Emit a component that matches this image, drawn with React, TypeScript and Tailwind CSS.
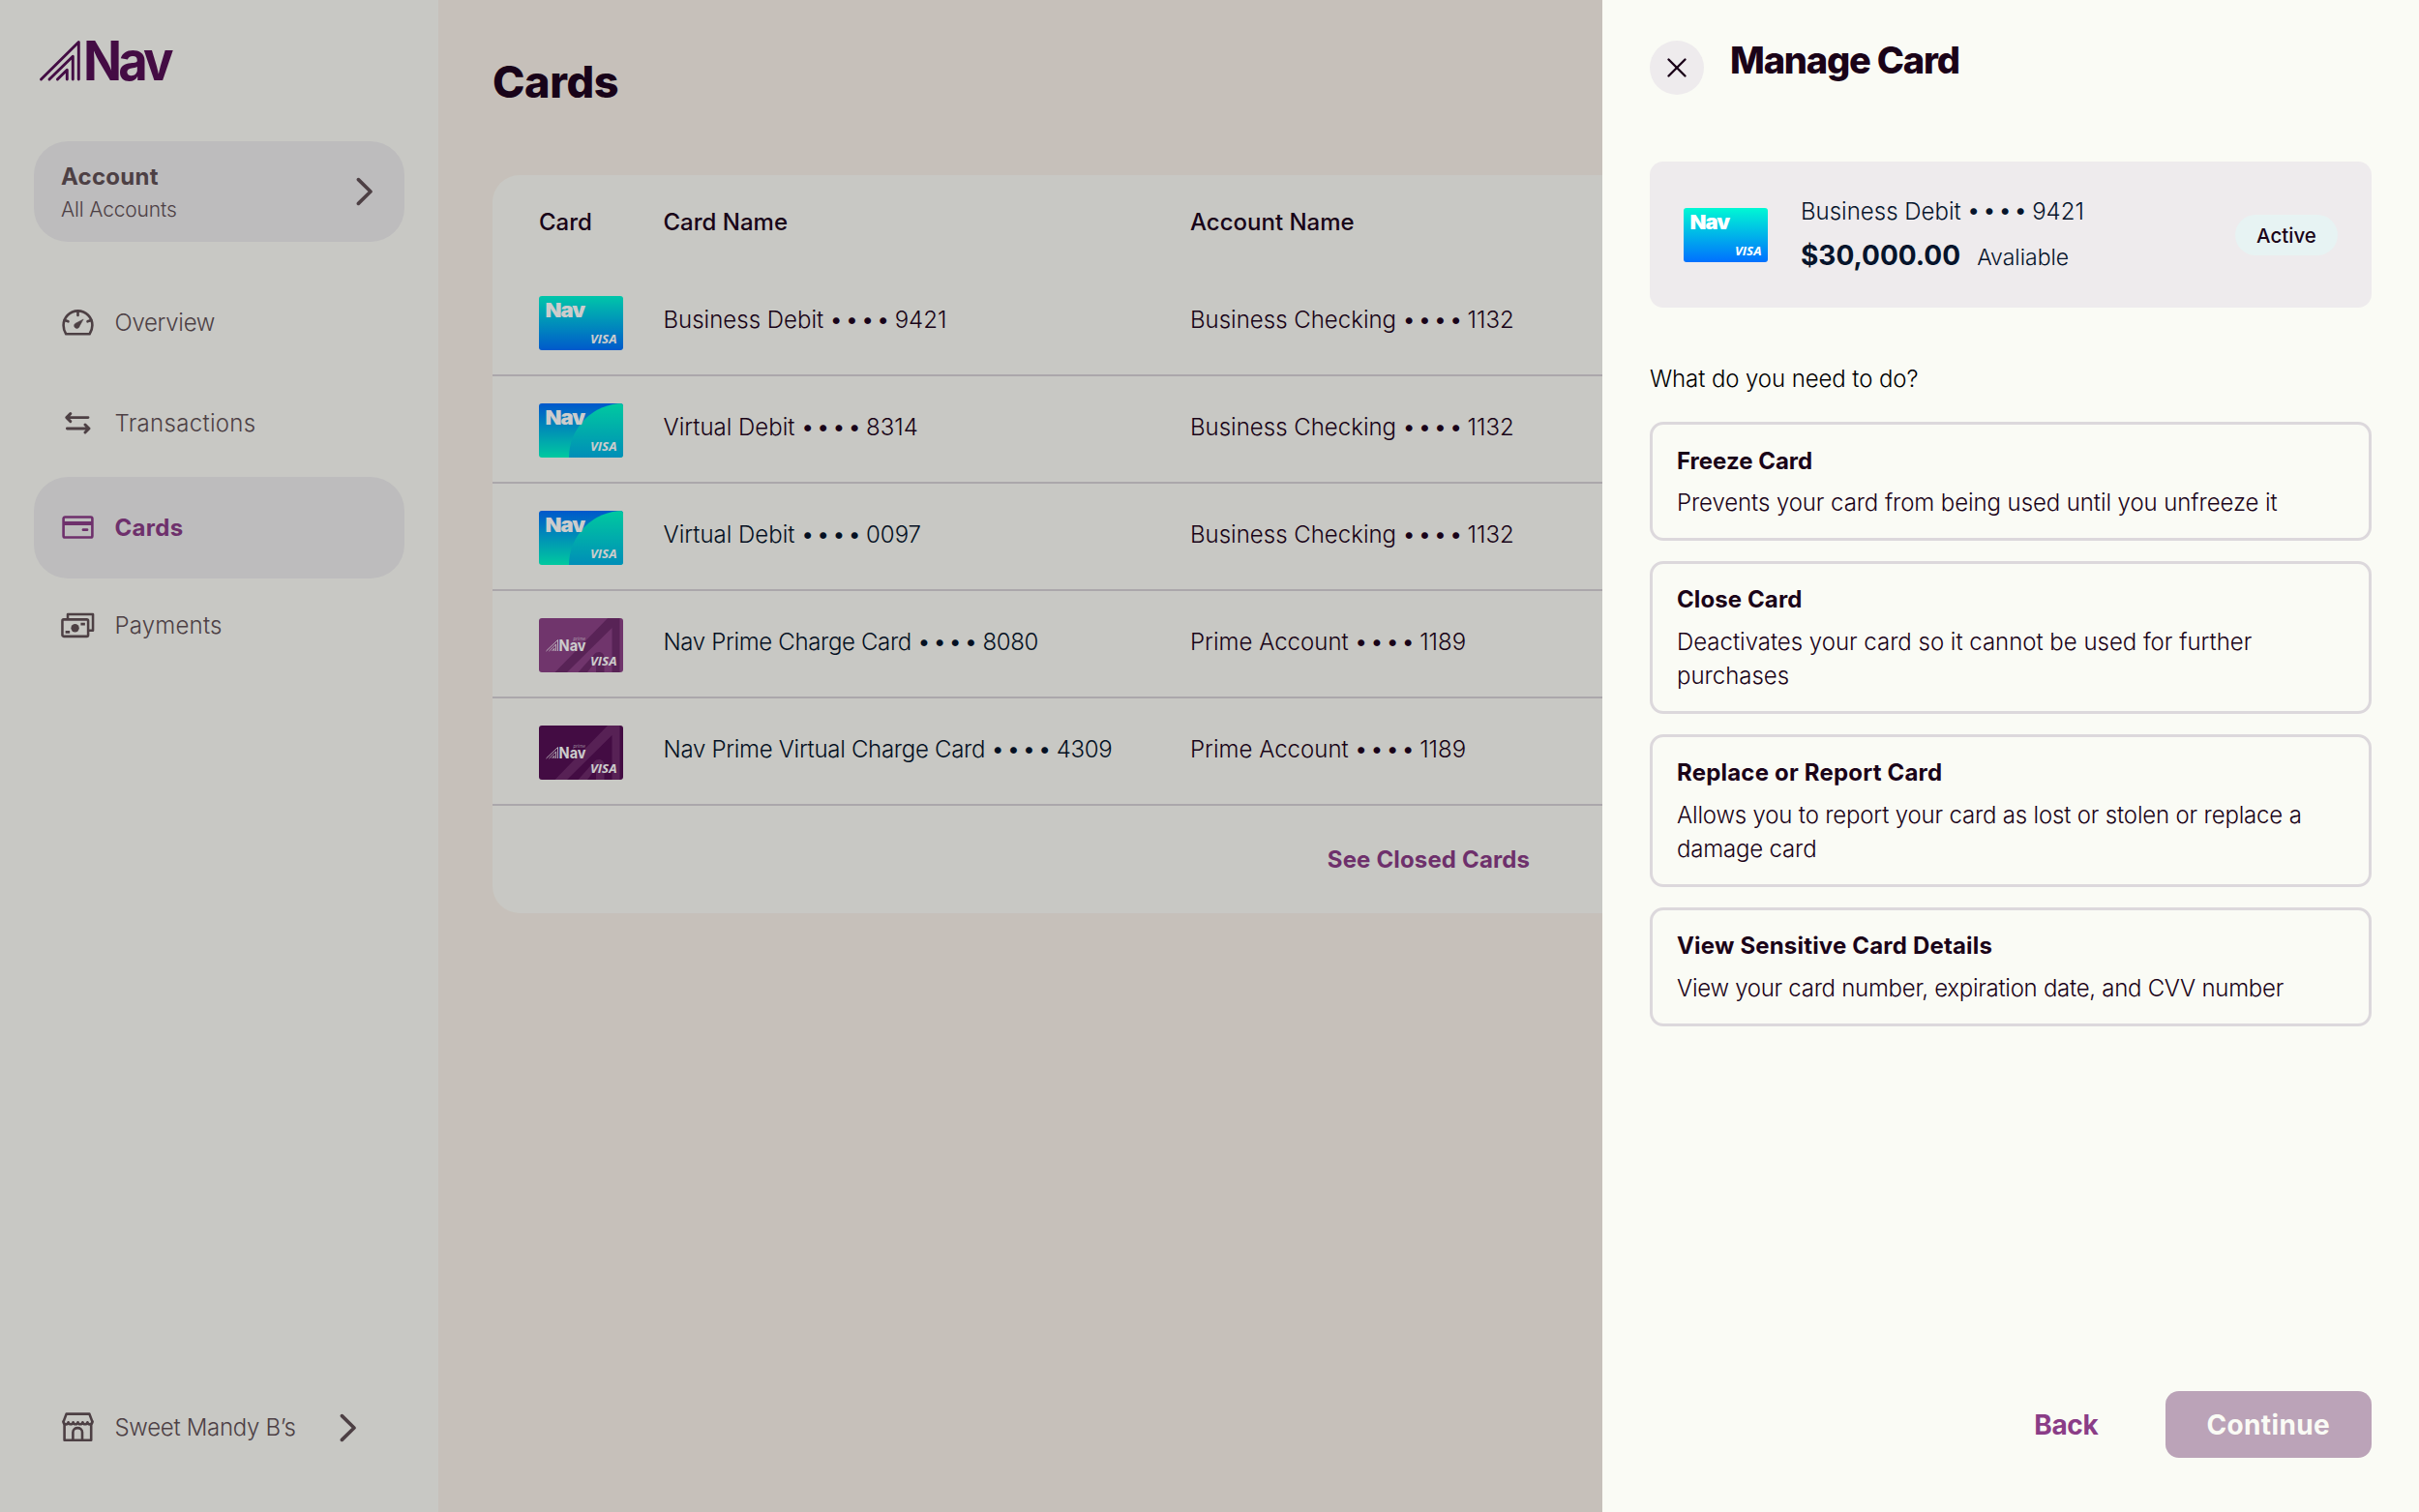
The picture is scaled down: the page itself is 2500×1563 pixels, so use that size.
import React from 'react';
import { X } from 'lucide-react';

type CardArtVariant = 'debit' | 'virtual' | 'prime' | 'primeVirtual';

interface CardRow {
  art: CardArtVariant;
  name: string;
  last4: string;
  account: string;
  accountLast4: string;
  nameClass: string;
}

const rows: CardRow[] = [
  { art: 'debit', name: 'Business Debit', last4: '9421', account: 'Business Checking', accountLast4: '1132', nameClass: 'text-[#1f0420]' },
  { art: 'virtual', name: 'Virtual Debit', last4: '8314', account: 'Business Checking', accountLast4: '1132', nameClass: 'text-[#1f0420]' },
  { art: 'virtual', name: 'Virtual Debit', last4: '0097', account: 'Business Checking', accountLast4: '1132', nameClass: 'text-[#06142b]' },
  { art: 'prime', name: 'Nav Prime Charge Card', last4: '8080', account: 'Prime Account', accountLast4: '1189', nameClass: 'text-[#06142b] tracking-[-0.35px]' },
  { art: 'primeVirtual', name: 'Nav Prime Virtual Charge Card', last4: '4309', account: 'Prime Account', accountLast4: '1189', nameClass: 'text-[#06142b] tracking-[-0.3px]' },
];

const options = [
  {
    title: 'Freeze Card',
    titleClass: 'tracking-normal',
    description: 'Prevents your card from being used until you unfreeze it',
    descriptionClass: 'tracking-[-0.09px]',
  },
  {
    title: 'Close Card',
    titleClass: 'tracking-[0.1px]',
    description: 'Deactivates your card so it cannot be used for further purchases',
    descriptionClass: 'tracking-[-0.02px]',
  },
  {
    title: 'Replace or Report Card',
    titleClass: 'tracking-[0.2px]',
    description: 'Allows you to report your card as lost or stolen or replace a damage card',
    descriptionClass: 'tracking-[-0.18px]',
  },
  {
    title: 'View Sensitive Card Details',
    titleClass: 'tracking-[0.18px]',
    description: 'View your card number, expiration date, and CVV number',
    descriptionClass: 'tracking-[-0.28px]',
  },
];

function Logo() {
  return (
    <svg width="144" height="44" viewBox="0 0 144 44" className="overflow-visible text-[#551055]">
      <g fill="none" stroke="currentColor" strokeWidth="2.9" strokeLinecap="round" strokeLinejoin="round">
        <path d="M2.5 41 L41.3 2.5 V41" />
        <path d="M11 41 L35.3 17.2 V41" />
        <path d="M19.4 41 L29.3 31.2 V41" />
      </g>
      <text
        x="46"
        y="41.5"
        fill="currentColor"
        fontFamily="Inter, sans-serif"
        fontWeight="700"
        fontSize="56"
        letterSpacing="-4.2"
        textLength="89.5"
        lengthAdjust="spacingAndGlyphs"
      >
        Nav
      </text>
    </svg>
  );
}

function GaugeIcon() {
  return (
    <svg width="33" height="27" viewBox="0 0 33 27" fill="none" stroke="currentColor" strokeWidth="2.6" strokeLinejoin="round" strokeLinecap="round">
      <path d="M4.2 25.3 C2.3 22.5 1.6 19.4 1.6 16.3 A14.9 14.9 0 0 1 31.4 16.3 C31.4 19.4 30.4 22.5 28.6 25.3 Z" />
      <path d="M16.5 1.8 V6 M2.8 11 L6.5 12.3 M30.2 11 L26.5 12.3" />
      <path d="M21.8 10.2 L13.8 14.4 A2.8 2.8 0 1 0 18.2 17.2 Z" fill="currentColor" stroke="currentColor" strokeWidth="0.6" />
    </svg>
  );
}

function TransferIcon() {
  return (
    <svg width="27" height="23" viewBox="0 0 27 23" fill="none" stroke="currentColor" strokeWidth="2.9" strokeLinejoin="round" strokeLinecap="round">
      <path d="M24 5.6 H1.8 M5.8 1.6 L1.8 5.6 L5.8 9.6" />
      <path d="M2.4 17 H25 M21 13 L25 17 L21 21" />
    </svg>
  );
}

function CardIcon() {
  return (
    <svg width="33" height="24" viewBox="0 0 33 24" fill="none" stroke="currentColor" strokeWidth="2.6">
      <rect x="1.6" y="1.5" width="29.8" height="21" rx="1.6" />
      <path d="M2 8 H31" strokeWidth="4" />
      <path d="M22 14.7 H26" strokeLinecap="round" strokeWidth="2.8" />
    </svg>
  );
}

function CashIcon() {
  return (
    <svg width="36" height="27" viewBox="0 0 36 27" fill="none" stroke="currentColor" strokeWidth="2.6" strokeLinejoin="round">
      <rect x="1.5" y="7.2" width="27.4" height="18" rx="1.4" />
      <path d="M7.2 7 V1.6 H34 V19 H29" />
      <circle cx="15" cy="16.3" r="4.3" fill="currentColor" stroke="none" />
      <path d="M21 12 H25.6 M4.8 20.6 H9.4" strokeWidth="2.8" />
    </svg>
  );
}

function StoreIcon() {
  return (
    <svg width="33" height="31" viewBox="0 0 33 31" fill="none" stroke="currentColor" strokeWidth="2.6" strokeLinejoin="round" strokeLinecap="round">
      <path d="M1.6 9.6 L4.6 1.6 H28.4 L31.4 9.6" />
      <path d="M1.6 9.6 C1.6 13.2 6 13.2 6.6 10.2 C7.2 13 11 13 11.6 10.2 C12.2 13 15.9 13 16.5 10.2 C17.1 13 20.8 13 21.4 10.2 C22 13 25.8 13 26.4 10.2 C27 13.2 31.4 13.2 31.4 9.6" />
      <path d="M2.6 12 V28.8 H30.2 V12" />
      <path d="M11.4 28.8 V20.6 C11.4 14.6 21 14.6 21 20.6 V28.8" />
    </svg>
  );
}

function Chevron() {
  return (
    <svg width="18" height="30" viewBox="0 0 18 30" fill="none" stroke="currentColor" strokeWidth="3.6" strokeLinecap="round" strokeLinejoin="round">
      <path d="M2.4 2.6 L15 15 L2.4 27.4" />
    </svg>
  );
}

function CardArt({ variant, id }: { variant: CardArtVariant; id: string }) {
  const isPrime = variant === 'prime' || variant === 'primeVirtual';
  const base = variant === 'prime' ? '#8c4387' : '#540f54';
  const pattern = variant === 'prime' ? '#6f2c6c' : '#6d2a6b';

  return (
    <svg width="87" height="56" viewBox="0 0 87 56" className="shrink-0 rounded-[3px]">
      <defs>
        <linearGradient id={`${id}-bg`} x1="0" y1="0" x2="0" y2="1">
          <stop offset="0" stopColor={variant === 'debit' ? '#00f8d4' : '#006eff'} />
          <stop offset="1" stopColor={variant === 'debit' ? '#0070ff' : '#00fcc8'} />
        </linearGradient>
        <linearGradient id={`${id}-arc`} x1="0" y1="0" x2="0" y2="1">
          <stop offset="0" stopColor="#00fcc8" />
          <stop offset="1" stopColor="#00b2e6" />
        </linearGradient>
      </defs>
      <rect width="87" height="56" fill={isPrime ? base : `url(#${id}-bg)`} />
      {variant === 'virtual' && <path d="M31 56 A56 56 0 0 1 87 0 V56 Z" fill={`url(#${id}-arc)`} />}
      {isPrime && (
        <g fill={pattern}>
          <path d="M16.5 56 L71 0 H83.5 V56 H75.5 V10 L29 56 Z" />
          <path d="M40.5 56 L57 37.5 C61 33 67.5 35 67.5 41 V56 H59 V44 L50 56 Z" />
        </g>
      )}
      {isPrime ? (
        <>
          <g fill="none" stroke="#fff" strokeWidth="0.8" strokeLinejoin="round">
            <path d="M7.5 34 L19.5 22.5 V34 M10.5 34 L17.6 27 V34 M13.4 34 L15.8 31.4 V34" />
          </g>
          <text x="20.6" y="34.2" fill="#fff" fontFamily="Inter, sans-serif" fontWeight="700" fontSize="16.5" textLength="28" lengthAdjust="spacingAndGlyphs">
            Nav
          </text>
          <text x="35.5" y="23.2" fill="#fff" opacity="0.75" fontFamily="Inter, sans-serif" fontStyle="italic" fontSize="4.8" textLength="12.5" lengthAdjust="spacingAndGlyphs">
            prime
          </text>
        </>
      ) : (
        <text x="6.4" y="22" fill="#fff" fontFamily="Inter, sans-serif" fontWeight="900" fontSize="20.5" letterSpacing="-0.8" textLength="41" lengthAdjust="spacingAndGlyphs">
          Nav
        </text>
      )}
      <text x="53" y="48.5" fill="#fff" fontFamily="'Open Sans', sans-serif" fontStyle="italic" fontWeight="700" fontSize="12.5" textLength="27.5" lengthAdjust="spacingAndGlyphs">
        VISA
      </text>
    </svg>
  );
}

function MaskedNumber({ label, last4 }: { label: string; last4: string }) {
  return (
    <span className="flex items-center whitespace-nowrap">
      <span>{label}</span>
      <span className="w-[73.5px] pb-[2px] text-center text-[22px] font-normal tracking-[-1.2px]">• • • •</span>
      <span>{last4}</span>
    </span>
  );
}

function NavItem({ icon, label, active, className }: { icon: React.ReactNode; label: string; active?: boolean; className: string }) {
  return (
    <a
      className={`flex items-center rounded-[35px] pl-[28px] ${
        active ? 'bg-[#edebed] font-bold text-[#8a3d87]' : 'font-light text-[#615056]'
      } ${className}`}
    >
      <span className="flex w-[35px] justify-center">{icon}</span>
      <span className="ml-[20.5px] pt-[1px]">{label}</span>
    </a>
  );
}

function Sidebar() {
  return (
    <aside className="flex h-full w-[453px] shrink-0 flex-col bg-[#fafbf5] pr-[35px] pb-[39px] pl-[35px] text-[#615056]">
      <div className="mt-[41px] ml-[5px] h-[44px]">
        <Logo />
      </div>
      <div className="mt-[61px] flex h-[104px] items-center justify-between rounded-[35px] bg-[#edebed] pr-[32px] pl-[28px]">
        <div className="pt-[2.5px]">
          <div className="text-[24px] leading-[35px] font-bold tracking-[0.25px]">Account</div>
          <div className="text-[21px] leading-[33px] font-light tracking-[-0.15px]">All Accounts</div>
        </div>
        <Chevron />
      </div>
      <nav className="mt-[31px] flex flex-col">
        <NavItem icon={<GaugeIcon />} label="Overview" className="h-[104px] tracking-[-0.3px]" />
        <NavItem icon={<TransferIcon />} label="Transactions" className="h-[108px] pb-[3px] tracking-[0.3px]" />
        <NavItem icon={<CardIcon />} label="Cards" active className="h-[104.5px] tracking-[0.3px]" />
        <NavItem icon={<CashIcon />} label="Payments" className="h-[97px] tracking-[0.2px]" />
      </nav>
      <div className="mt-auto flex items-center justify-between pr-[49px] text-[#615056]">
        <NavItem icon={<StoreIcon />} label="Sweet Mandy B’s" className="h-[97px] tracking-[-0.3px]" />
        <Chevron />
      </div>
    </aside>
  );
}

function CardsTable() {
  return (
    <section className="mt-[77px] overflow-hidden rounded-[28px] bg-[#fafbf5] text-[#1f0420]">
      <div className="flex h-[97px] items-center pl-[48px] font-medium">
        <div className="w-[128.5px]">Card</div>
        <div className="w-[544.5px]">Card Name</div>
        <div>Account Name</div>
      </div>
      {rows.map((row) => (
        <div key={row.last4} className="flex h-[111.1px] items-center border-b-2 border-[#d6d1d6] pt-[2px] pl-[48px] font-light">
          <div className="w-[128.5px]">
            <CardArt variant={row.art} id={`row-${row.last4}`} />
          </div>
          <div className={`w-[544.5px] pb-[6px] ${row.nameClass}`}>
            <MaskedNumber label={row.name} last4={row.last4} />
          </div>
          <div className="pb-[6px]">
            <MaskedNumber label={row.account} last4={row.accountLast4} />
          </div>
        </div>
      ))}
      <div className="flex h-[110.6px] items-center justify-center pt-[1px] font-bold tracking-[0.15px] text-[#8a3d87]">See Closed Cards</div>
    </section>
  );
}

function ManageCardDrawer() {
  return (
    <aside className="flex h-full w-[844px] flex-col bg-[#fafbf5] px-[49px] pt-[42px] pb-[56px] text-[#1a0318]">
      <div className="flex items-start">
        <button className="flex size-[55.5px] items-center justify-center rounded-full bg-[#eeebed]">
          <X className="size-[34px]" strokeWidth={1.7} />
        </button>
        <h2 className="ml-[27.5px] pt-[1px] text-[38px] leading-[38px] font-extrabold tracking-[-1.2px]">Manage Card</h2>
      </div>

      <div className="mt-[69.5px] flex h-[151px] items-center rounded-[14px] bg-[#eeebed] pr-[35px] pl-[35px]">
        <CardArt variant="debit" id="summary" />
        <div className="ml-[34px] pb-[1px] text-[#06142b]">
          <div className="leading-[43.5px] font-light">
            <MaskedNumber label="Business Debit" last4="9421" />
          </div>
          <div className="flex items-baseline leading-[44.5px]">
            <span className="text-[28px] font-bold">$30,000.00</span>
            <span className="ml-[17px] text-[23px] font-light">Avaliable</span>
          </div>
        </div>
        <div className="ml-auto flex h-[42px] w-[106px] items-center justify-center rounded-full bg-[#e7f3f3] pt-[2px] text-[20.5px] font-medium">
          Active
        </div>
      </div>

      <p className="mt-[55.5px] leading-[36px] font-light tracking-[-0.1px] text-black">What do you need to do?</p>

      <div className="mt-[26.5px] flex flex-col gap-[21px]">
        {options.map((option) => (
          <button key={option.title} className="rounded-[14px] border-3 border-[#dcd8dc] px-[25px] pt-[19.5px] pb-[19.3px] text-left">
            <div className={`leading-[35px] font-bold ${option.titleClass}`}>{option.title}</div>
            <div className={`mt-[8.2px] leading-[35px] font-light ${option.descriptionClass}`}>{option.description}</div>
          </button>
        ))}
      </div>

      <div className="mt-auto flex items-center justify-end text-[28px] font-bold">
        <button className="mr-[69px] pt-[1.5px] tracking-[-0.3px] text-[#8a3d87]">Back</button>
        <button className="h-[69.5px] w-[213.5px] rounded-[14px] bg-[#bba3b8] pt-[1.5px] tracking-[0.35px] text-[#fafbf5]">Continue</button>
      </div>
    </aside>
  );
}

export default function App() {
  return (
    <div className="flex h-[1563px] w-[2500px] overflow-hidden bg-[#f8f1e9] font-['Inter',sans-serif] text-[24px] leading-[36px]">
      <Sidebar />
      <main className="flex-1 pt-[65px] pr-[56px] pl-[56px]">
        <h1 className="text-[45px] leading-[39px] font-extrabold tracking-[-0.4px] text-[#1f0420]">Cards</h1>
        <CardsTable />
      </main>
      <div className="fixed inset-0 flex justify-end bg-black/20">
        <ManageCardDrawer />
      </div>
    </div>
  );
}
